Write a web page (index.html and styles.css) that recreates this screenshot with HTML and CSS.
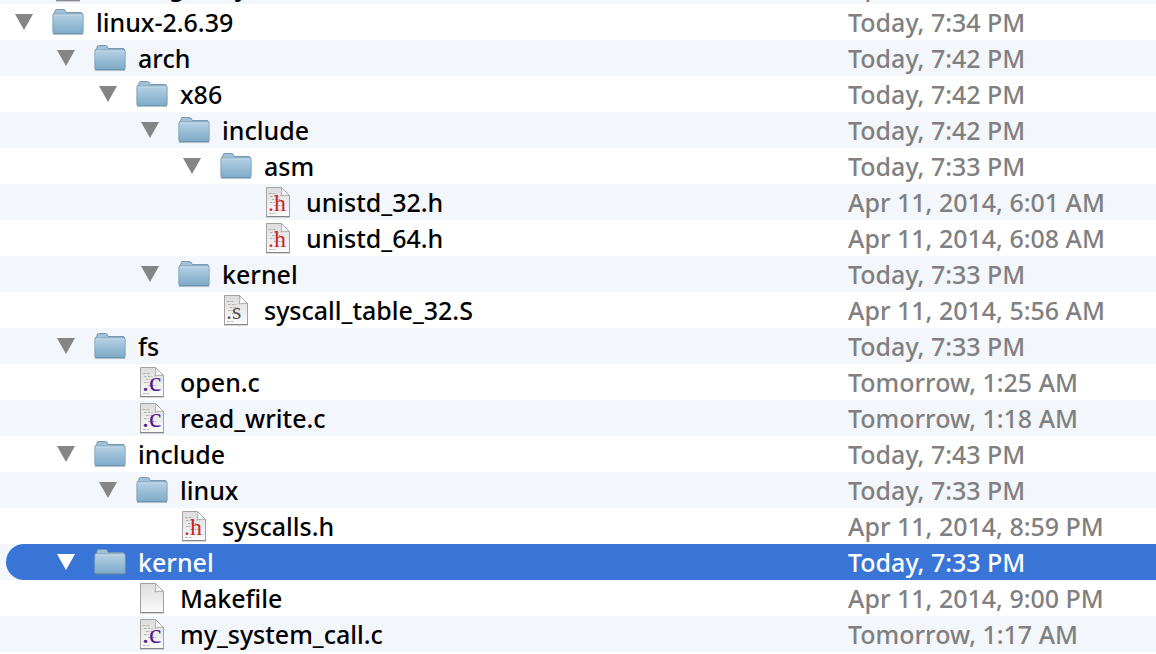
FILE: index.html
```
<!DOCTYPE html>
<html lang="en">
<head>
<meta charset="utf-8">
<title>linux-2.6.39</title>
<link rel="stylesheet" href="styles.css">
</head>
<body>
<svg class="defs" aria-hidden="true">
  <defs>
    <linearGradient id="front" x1="0" y1="0" x2="0" y2="1">
      <stop offset="0" stop-color="#b5d1e4"/><stop offset="1" stop-color="#7eabc9"/>
    </linearGradient>
    <linearGradient id="paper" x1="0" y1="0" x2="0" y2="1">
      <stop offset="0" stop-color="#dcdcdc"/><stop offset="1" stop-color="#fbfbfb"/>
    </linearGradient>
    <symbol id="folder" viewBox="0 0 32 28">
      <path d="M1.500 25V5.500L3 4.500V3q0-1.500 1.500-1.500h7Q13 1.500 13.500 3l.6 1.500H29q1.500 0 1.500 1.500v19z" fill="#9fc0d5" stroke="#7598ae"/>
      <path d="M.8 7q0-1 1-1h28.400q1 0 1 1v17.500q0 1-1 1H1.800q-1 0-1-1z" fill="url(#front)" stroke="#7a9fb7" stroke-width=".8"/>
      <path d="M2 7h28" stroke="#c4dbe9"/>
      <path d="M1 26h30" stroke="#62879e"/>
    </symbol>
    <symbol id="page" viewBox="0 0 26 32">
      <path d="M1.500 1.500h15l8 8v21h-23z" fill="url(#paper)" stroke="#a2a2a2"/>
      <path d="M16.500 1.500q1 4-.5 8.500 4-1.500 8.500-.5z" fill="#fff" stroke="#a2a2a2" stroke-width=".9"/>
      <path d="M1 30.800h24" stroke="#7c7c7c"/>
    </symbol>
    <symbol id="code" viewBox="0 0 26 32">
      <use href="#page"/>
      <path d="M4 7.500h7M5 10.500h3m1 0h5M7 13.500h9M5 16.500h5M9 19.500h9M4 27.500h7" fill="none" stroke="#a0a0a0" stroke-width=".8" stroke-dasharray="2 .6 1 .8"/>
    </symbol>
  </defs>
</svg>
<main class="finder">
  <table class="files" aria-label="Files">
    <colgroup><col><col class="date-col"></colgroup>
    <tbody id="rows"></tbody>
  </table>
</main>
<script src="rows.js"></script>
</body>
</html>
```
FILE: styles.css
```
body {
  margin: 0;
  background: #fff;
  color: #000;
  font-family: "Lucida Grande", "Noto Sans", sans-serif;
  font-size: 25px;
  font-weight: 500;
  line-height: 36px;
}
.defs {
  position: absolute;
  width: 0;
  height: 0;
}
.finder {
  height: 100vh;
  overflow: hidden;
}
.files {
  width: 100%;
  margin-top: -32px;
  table-layout: fixed;
  border-collapse: collapse;
}
.date-col { width: 308px; }
.files tr { background: #fff; }
.files tr:nth-child(odd) { background: #f3f6fb; }
.files td {
  height: 36px;
  padding: 0;
  white-space: nowrap;
}
.files .date { color: #808080; }
.name {
  display: flex;
  align-items: center;
  height: 36px;
  margin-left: 6px;
  padding-left: 8px;
}
.level-1 { padding-left: 50px; }
.level-2 { padding-left: 92px; }
.level-3 { padding-left: 134px; }
.level-4 { padding-left: 176px; }
.level-5 { padding-left: 218px; }
.toggle {
  display: flex;
  width: 20px;
  height: 36px;
  margin-right: 18px;
  padding: 0;
  align-items: center;
  border: 0;
  background: none;
  color: #858585;
}
.spacer {
  width: 38px;
}
.toggle svg {
  width: 20px;
  height: 16px;
}
.icon {
  display: flex;
  flex: none;
  justify-content: center;
  width: 32px;
  margin-right: 12px;
}
.folder {
  width: 32px;
  height: 28px;
}
.page {
  width: 26px;
  height: 32px;
}
.page text {
  font-family: "Liberation Serif", serif;
  font-size: 24px;
  font-weight: 400;
}
.page .c { font-size: 28px; }
.h { fill: #c9252b; }
.c { fill: #4d1a91; }
.s { fill: #555; }
.selected .name {
  border-radius: 18px 0 0 18px;
  background: #3875d7;
}
.selected .date { background: #3875d7; }
.files .selected .name,
.files .selected .date,
.files .selected .toggle { color: #fff; }
```
FILE: rows.js
```
const files = [
  [0, "page", "Linux-gentry", "Apr 11, 2014, 6:01 AM"],
  [0, "folder", "linux-2.6.39", "Today, 7:34 PM"],
  [1, "folder", "arch", "Today, 7:42 PM"],
  [2, "folder", "x86", "Today, 7:42 PM"],
  [3, "folder", "include", "Today, 7:42 PM"],
  [4, "folder", "asm", "Today, 7:33 PM"],
  [5, "h", "unistd_32.h", "Apr 11, 2014, 6:01 AM"],
  [5, "h", "unistd_64.h", "Apr 11, 2014, 6:08 AM"],
  [3, "folder", "kernel", "Today, 7:33 PM"],
  [4, "s", "syscall_table_32.S", "Apr 11, 2014, 5:56 AM"],
  [1, "folder", "fs", "Today, 7:33 PM"],
  [2, "c", "open.c", "Tomorrow, 1:25 AM"],
  [2, "c", "read_write.c", "Tomorrow, 1:18 AM"],
  [1, "folder", "include", "Today, 7:43 PM"],
  [2, "folder", "linux", "Today, 7:33 PM"],
  [3, "h", "syscalls.h", "Apr 11, 2014, 8:59 PM"],
  [1, "folder", "kernel", "Today, 7:33 PM", true],
  [2, "page", "Makefile", "Apr 11, 2014, 9:00 PM"],
  [2, "c", "my_system_call.c", "Tomorrow, 1:17 AM"],
];

function icon(kind) {
  if (kind === "folder") return '<svg class="folder" aria-hidden="true"><use href="#folder"/></svg>';
  if (kind === "page") return '<svg class="page" viewBox="0 0 26 32" aria-hidden="true"><use href="#page"/></svg>';
  return `<svg class="page" viewBox="0 0 26 32" aria-hidden="true"><use href="#code"/><text class="${kind}" x="3" y="25">.${kind}</text></svg>`;
}

document.getElementById("rows").innerHTML = files.map(([level, kind, name, date, selected]) => {
  const toggle = kind === "folder"
    ? `<button class="toggle" type="button" aria-expanded="true" aria-label="Collapse ${name}"><svg viewBox="0 0 20 16" aria-hidden="true"><path d="M1 0h18l-9 16z" fill="currentColor"/></svg></button>`
    : '<span class="spacer"></span>';
  return `<tr${selected ? ' class="selected"' : ""}><td><div class="name level-${level}">${toggle}<span class="icon">${icon(kind)}</span><span class="label">${name}</span></div></td><td class="date">${date}</td></tr>`;
}).join("");
```
